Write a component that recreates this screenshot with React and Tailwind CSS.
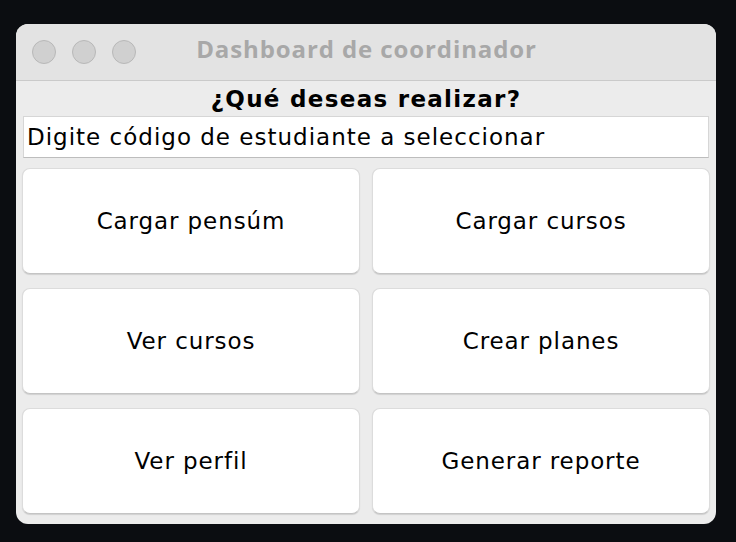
import React from 'react';

const labels = [
  'Cargar pensúm',
  'Cargar cursos',
  'Ver cursos',
  'Crear planes',
  'Ver perfil',
  'Generar reporte',
];

const Light = () => (
  <div className="w-[24px] h-[24px] rounded-full bg-[#d0d0d0] border border-[#b8b8b8]" />
);

export default function App() {
  return (
    <div className="w-[736px] h-[542px] bg-[#0b0d11] pt-[24px] pl-[16px] overflow-hidden">
      <div className="w-[700px] h-[500px] rounded-[12px] overflow-hidden bg-[#ececec] flex flex-col">
        {/* title bar */}
        <div className="relative h-[57px] bg-[#e3e3e3] border-b border-[#cacaca] flex items-center justify-center shrink-0">
          <div className="absolute left-[16px] top-[16px] flex gap-[16px]">
            <Light />
            <Light />
            <Light />
          </div>
          <span className="text-[24px] font-bold tracking-[0.9px] text-[#a8a8a8] font-['Open_Sans',Arial,sans-serif] -mt-[6px] ml-[1px]">
            Dashboard de coordinador
          </span>
        </div>

        <div className="h-[35px] flex items-center justify-center shrink-0">
          <span className="text-[23px] font-bold tracking-[1.3px] text-black font-['DejaVu_Sans',sans-serif] mt-[2px]">
            ¿Qué deseas realizar?
          </span>
        </div>

        <div className="mx-[7px] h-[42px] bg-white border border-[#d6d6d6] border-b-[#bdbdbd] flex items-center px-[3px] shrink-0">
          <span className="text-[23px] tracking-[1px] text-black font-['DejaVu_Sans',sans-serif]">
            Digite código de estudiante a seleccionar
          </span>
        </div>

        <div className="grid grid-cols-2 gap-x-[12px] gap-y-[14px] px-[6px] pt-[10px] pb-[10px] flex-1">
          {labels.map((l) => (
            <button
              key={l}
              className="bg-white rounded-[8px] border border-[#dcdcdc] border-b-[#c4c4c4] shadow-[0_1px_1px_rgba(0,0,0,0.12)] flex items-center justify-center text-[23px] tracking-[0.9px] text-black font-['DejaVu_Sans',sans-serif]"
            >
              {l}
            </button>
          ))}
        </div>
      </div>
    </div>
  );
}
